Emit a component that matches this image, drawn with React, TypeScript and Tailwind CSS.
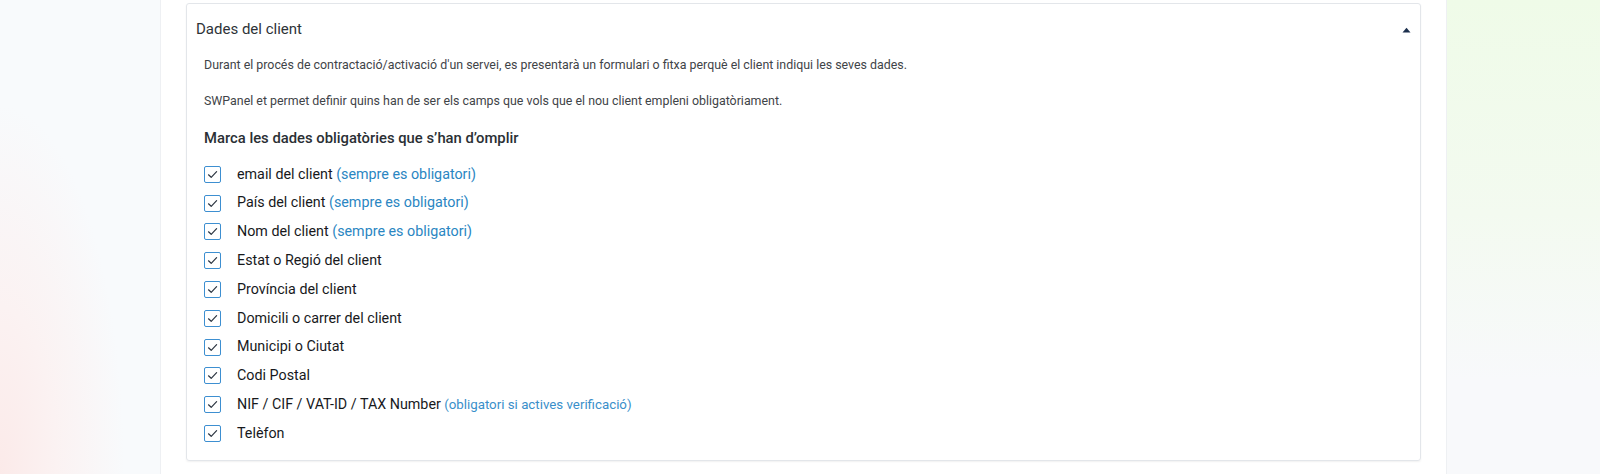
import React from "react";

const rows: { label: string; note?: string; noteLight?: boolean }[] = [
  { label: "email del client", note: "(sempre es obligatori)" },
  { label: "País del client", note: "(sempre es obligatori)" },
  { label: "Nom del client", note: "(sempre es obligatori)" },
  { label: "Estat o Regió del client" },
  { label: "Província del client" },
  { label: "Domicili o carrer del client" },
  { label: "Municipi o Ciutat" },
  { label: "Codi Postal" },
  { label: "NIF / CIF / VAT-ID / TAX Number", note: "(obligatori si actives verificació)", noteLight: true },
  { label: "Telèfon" },
];

function Check() {
  return (
    <span className="flex h-[17px] w-[17px] shrink-0 items-center justify-center rounded-[2px] border-[1.5px] border-[#3d8fd1] bg-white">
      <svg width="11" height="9" viewBox="0 0 11 9" fill="none">
        <path d="M1.5 4.8 L4.2 7.3 L9.6 1.6" stroke="#2b3440" strokeWidth="1.2" strokeLinecap="round" strokeLinejoin="round" />
      </svg>
    </span>
  );
}

export default function App() {
  return (
    <div
      className="flex h-[474px] w-full overflow-hidden bg-[#f8fafc]"
      style={{ fontFamily: "Roboto, 'Liberation Sans', sans-serif" }}
    >
      <div className="w-[160px] shrink-0 bg-[radial-gradient(ellipse_at_0%_100%,#fbeae9_0%,#fbf2f2_25%,rgba(248,250,252,0)_55%)]" />
      <div className="w-[1287px] shrink-0 border-x border-[#eef0f3] bg-white px-[25px] pt-[3px]">
        <div className="h-[458px] rounded-[3px] border border-[#e3e6ea] shadow-[0_1px_2px_rgba(0,0,0,0.06)]">
          <div className="flex h-[51px] items-center justify-between pl-[9px] pr-[9px]">
            <span className="text-[15px] text-[#2e3338]">Dades del client</span>
            <svg width="9" height="6" viewBox="0 0 9 6">
              <path d="M0.5 5.5 L4.5 0.8 L8.5 5.5 Z" fill="#1c2f4d" />
            </svg>
          </div>
          <div className="pl-[17px]">
            <p className="text-[12.4px] leading-[20px] text-[#3f4448]">
              Durant el procés de contractació/activació d'un servei, es presentarà un formulari o fitxa perquè el client indiqui les seves dades.
            </p>
            <p className="mt-[16px] text-[12.4px] leading-[20px] text-[#3f4448]">
              SWPanel et permet definir quins han de ser els camps que vols que el nou client empleni obligatòriament.
            </p>
            <h3 className="mt-[16px] text-[14.8px] font-medium leading-[22px] text-[#2a2f34]">
              Marca les dades obligatòries que s’han d’omplir
            </h3>
            <ul className="mt-[11px]">
              {rows.map((r) => (
                <li key={r.label} className="flex h-[28.8px] items-center">
                  <Check />
                  <span className="ml-[16px] text-[14.3px] text-[#17191c]">
                    {r.label}
                    {r.note && (
                      <span
                        className={
                          r.noteLight
                            ? "text-[13.3px] text-[#3a8fca]"
                            : "text-[#2a86c2]"
                        }
                      >
                        {" "}
                        {r.note}
                      </span>
                    )}
                  </span>
                </li>
              ))}
            </ul>
          </div>
        </div>
      </div>
      <div className="flex-1 bg-[linear-gradient(180deg,#effbe8_0%,#f3faf0_45%,#f8f9fb_80%,#f8f9fb_100%)]" />
    </div>
  );
}
